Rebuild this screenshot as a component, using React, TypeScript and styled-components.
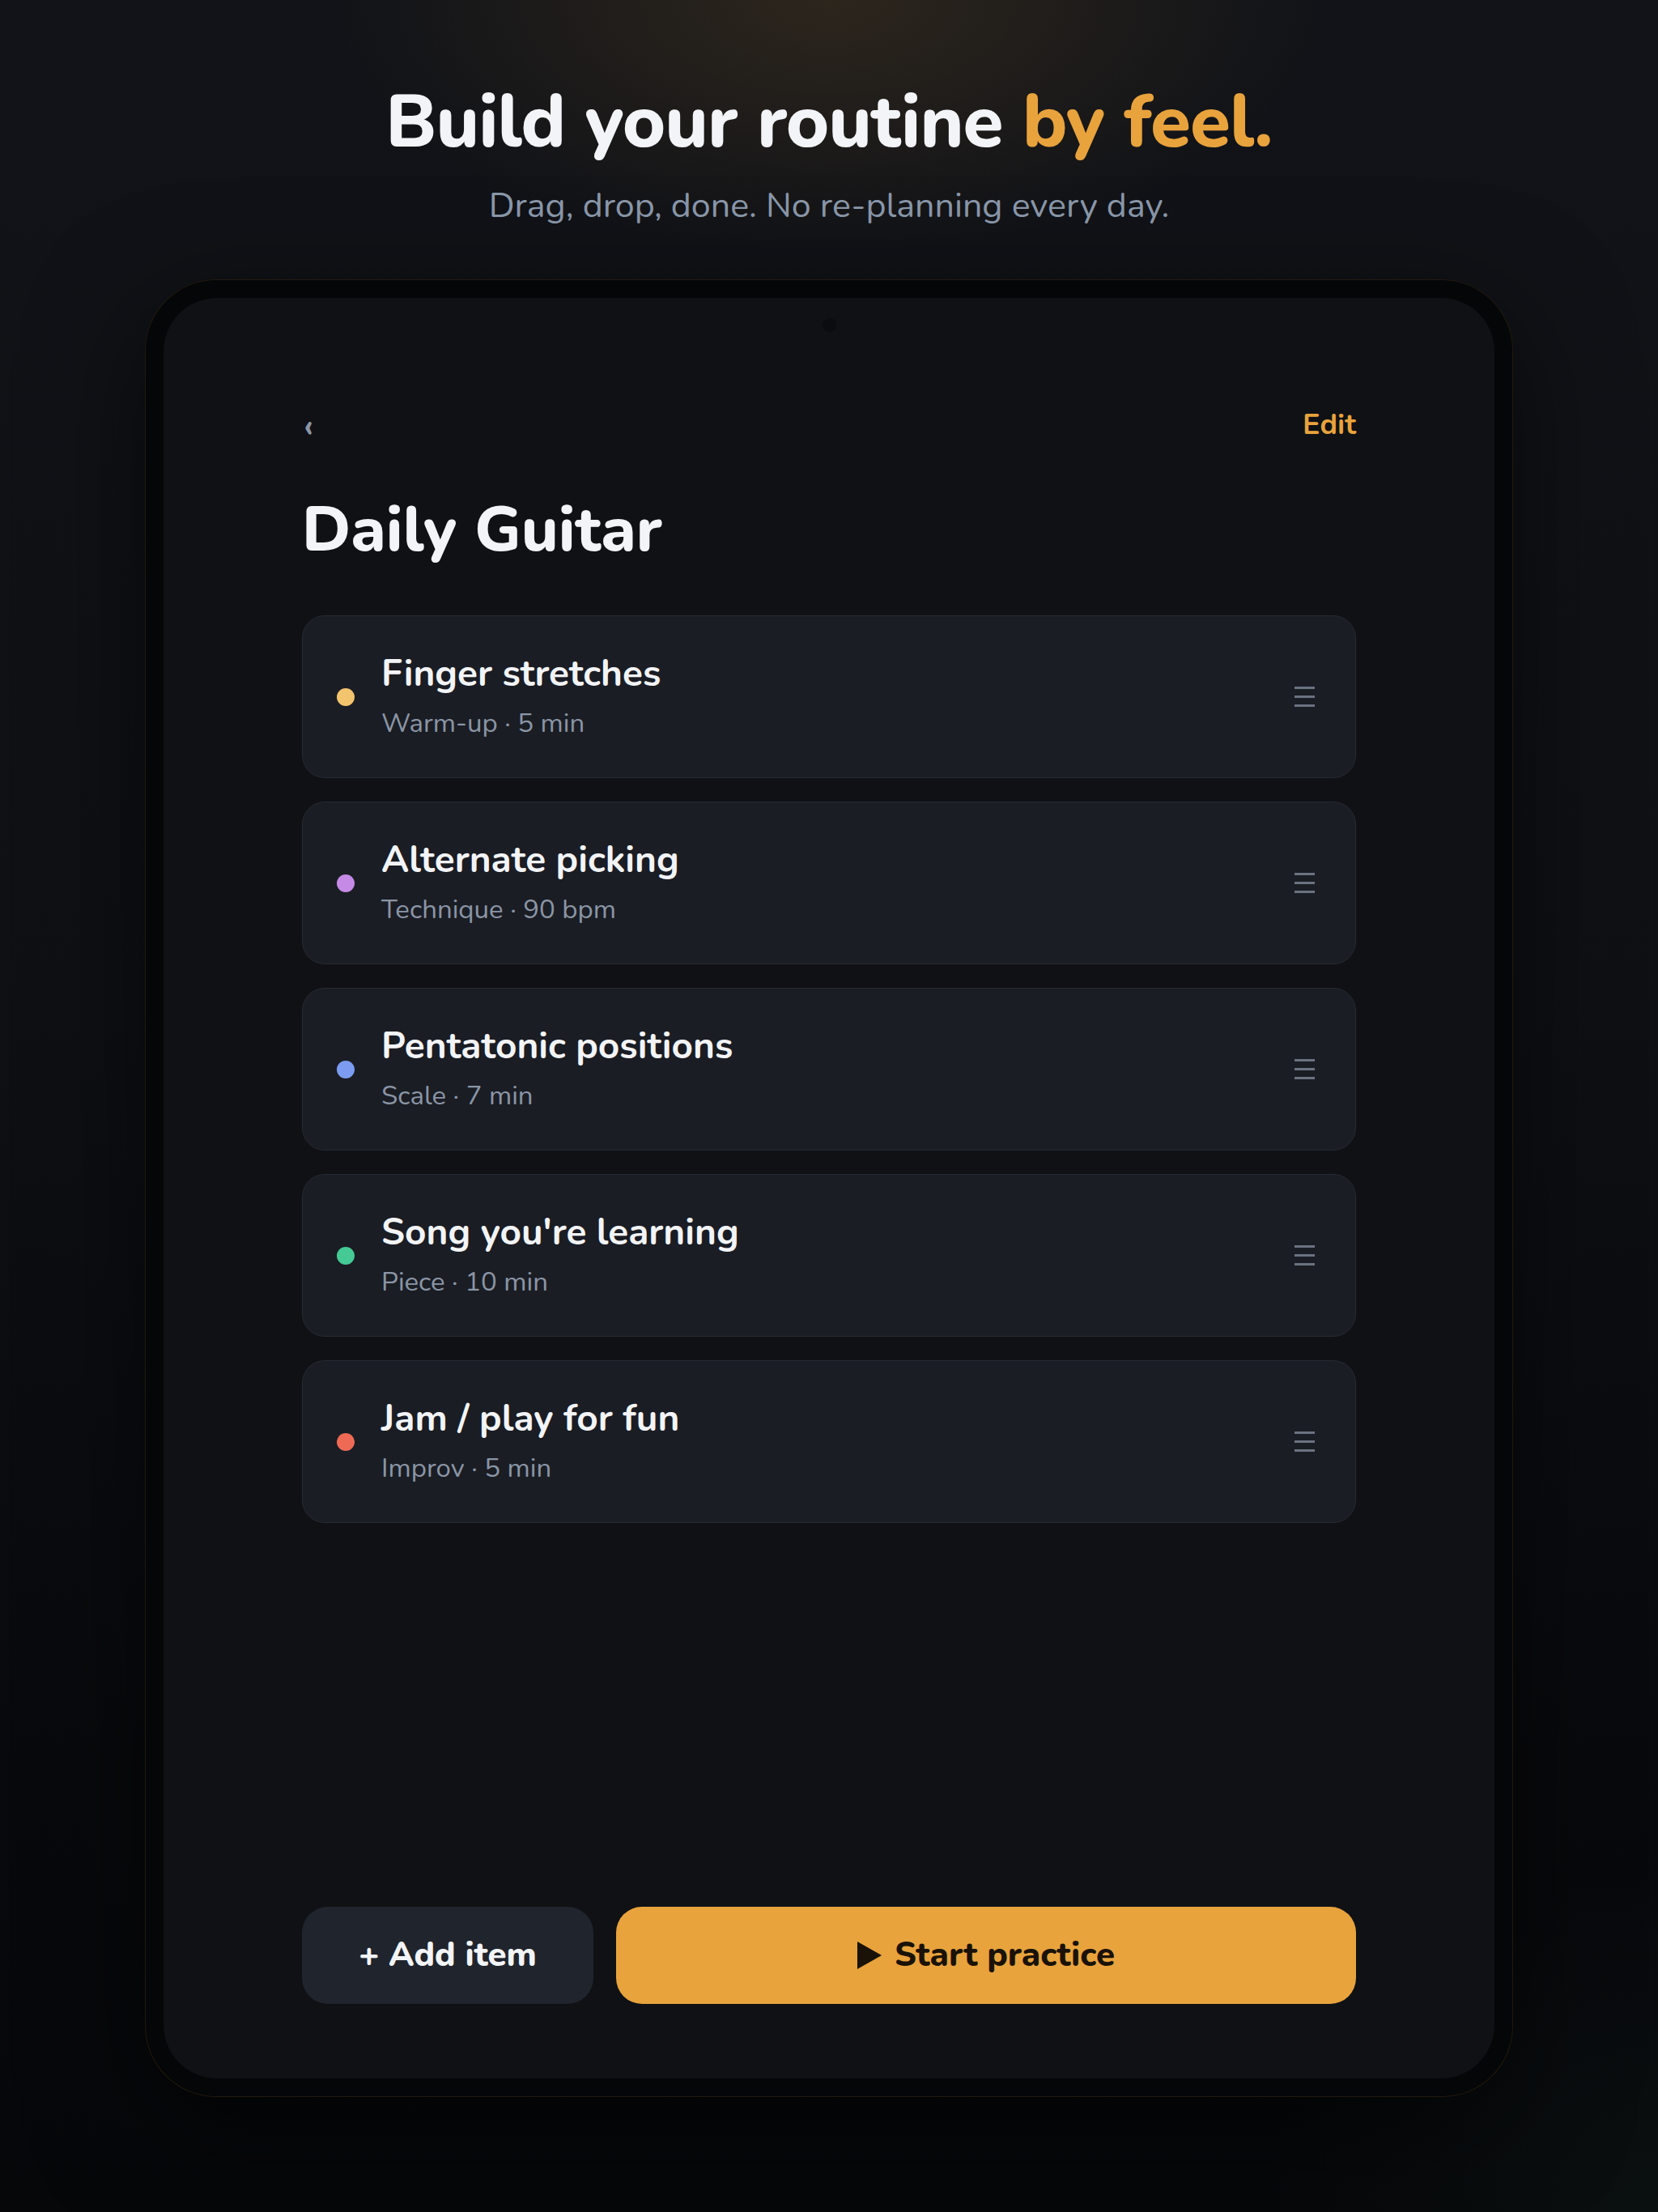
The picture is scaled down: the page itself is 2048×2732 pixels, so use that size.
import React from "react";
import styled, { createGlobalStyle } from "styled-components";

const GlobalStyle = createGlobalStyle`
  * { box-sizing: border-box; }
  body {
    margin: 0;
    background: #07080a;
    font-family: "Nunito", Lato, "Open Sans", sans-serif;
  }
`;

type Item = { title: string; meta: string; color: string };

const items: Item[] = [
  { title: "Finger stretches", meta: "Warm-up · 5 min", color: "#f2c46d" },
  { title: "Alternate picking", meta: "Technique · 90 bpm", color: "#c58ae6" },
  { title: "Pentatonic positions", meta: "Scale · 7 min", color: "#7b9cf0" },
  { title: "Song you're learning", meta: "Piece · 10 min", color: "#45c995" },
  { title: "Jam / play for fun", meta: "Improv · 5 min", color: "#ef6a55" },
];

const App = () => {
  return (
    <>
      <GlobalStyle />
      <Page>
        <Hero>
          <Headline>
            Build your routine <span>by feel.</span>
          </Headline>
          <Tagline>Drag, drop, done. No re-planning every day.</Tagline>
        </Hero>

        <Tablet>
          <Screen>
            <Camera />
            <Content>
              <TopBar>
                <Back>‹</Back>
                <EditLink>Edit</EditLink>
              </TopBar>
              <Title>Daily Guitar</Title>

              <List>
                {items.map((item) => (
                  <Card key={item.title}>
                    <Dot color={item.color} />
                    <CardText>
                      <CardTitle>{item.title}</CardTitle>
                      <CardMeta>{item.meta}</CardMeta>
                    </CardText>
                    <Handle>
                      <i />
                      <i />
                      <i />
                    </Handle>
                  </Card>
                ))}
              </List>

              <Actions>
                <AddButton>+ Add item</AddButton>
                <StartButton>
                  <svg width="30" height="34" viewBox="0 0 30 34">
                    <polygon points="0,0 30,17 0,34" fill="#1a1206" />
                  </svg>
                  Start practice
                </StartButton>
              </Actions>
            </Content>
          </Screen>
        </Tablet>
      </Page>
    </>
  );
};

export default App;

const Page = styled.div`
  min-height: 2732px;
  display: flex;
  flex-direction: column;
  align-items: center;
  background:
    radial-gradient(ellipse 820px 420px at 50% 0%, rgba(232, 163, 61, 0.13), transparent 75%),
    radial-gradient(ellipse 700px 600px at 100% 100%, rgba(70, 130, 100, 0.07), transparent 70%),
    linear-gradient(180deg, #111318 0%, #0e1014 45%, #08090c 80%, #060709 100%);
`;

const Hero = styled.header`
  padding-top: 106px;
  text-align: center;
`;

const Headline = styled.h1`
  margin: 0;
  font-size: 91px;
  line-height: 1;
  font-weight: 800;
  letter-spacing: -1px;
  color: #f3f4f7;

  span {
    color: #e8a33d;
  }
`;

const Tagline = styled.p`
  margin: 32px 0 0;
  font-size: 43px;
  line-height: 1.2;
  font-weight: 400;
  color: #8b98aa;
`;

const Tablet = styled.div`
  margin-top: 64px;
  width: 1690px;
  height: 2245px;
  padding: 22px;
  border-radius: 88px;
  background: #050608;
  border: 1px solid rgba(232, 163, 61, 0.12);
  box-shadow: 0 40px 140px rgba(0, 0, 0, 0.55);
`;

const Screen = styled.div`
  position: relative;
  height: 100%;
  border-radius: 66px;
  background: #0f1115;
  display: flex;
  justify-content: center;
`;

/* front camera, barely visible against the screen */
const Camera = styled.div`
  position: absolute;
  top: 25px;
  left: 50%;
  width: 17px;
  height: 17px;
  margin-left: -8px;
  border-radius: 50%;
  background: #0b0c0f;
`;

const Content = styled.div`
  width: 1302px;
  padding: 135px 0 92px;
  display: flex;
  flex-direction: column;
`;

const TopBar = styled.div`
  display: flex;
  align-items: center;
  justify-content: space-between;
  height: 43px;
`;

const Back = styled.span`
  font-size: 42px;
  line-height: 1;
  font-weight: 700;
  color: #8b95a5;
  padding-left: 2px;
  margin-top: 6px;
`;

const EditLink = styled.span`
  font-size: 36px;
  line-height: 1.2;
  font-weight: 700;
  color: #e8a33d;
`;

const Title = styled.h2`
  margin: 62px 0 0;
  font-size: 78px;
  line-height: 1.2;
  font-weight: 800;
  color: #f3f4f7;
`;

const List = styled.div`
  margin-top: 59px;
  display: flex;
  flex-direction: column;
  gap: 29px;
  flex: 1;
`;

const Card = styled.div`
  height: 201px;
  display: flex;
  align-items: center;
  padding: 0 50px 0 42px;
  background: #1a1d24;
  border: 1px solid #262a32;
  border-radius: 28px;
`;

const Dot = styled.span<{ color: string }>`
  width: 22px;
  height: 22px;
  flex-shrink: 0;
  border-radius: 50%;
  background: ${(p) => p.color};
`;

const CardText = styled.div`
  flex: 1;
  margin-left: 33px;
  margin-top: -2px;
`;

const CardTitle = styled.div`
  font-size: 46px;
  line-height: 1.25;
  font-weight: 700;
  color: #f3f4f7;
`;

const CardMeta = styled.div`
  margin-top: 12px;
  font-size: 33px;
  line-height: 1.3;
  font-weight: 400;
  color: #8b95a5;
`;

const Handle = styled.div`
  width: 25px;
  display: flex;
  flex-direction: column;
  gap: 8px;

  i {
    display: block;
    height: 3px;
    background: #6b7280;
  }
`;

const Actions = styled.div`
  display: flex;
  gap: 28px;
  height: 120px;
`;

const ButtonBase = styled.button`
  height: 100%;
  border: none;
  border-radius: 32px;
  font-family: inherit;
  font-size: 42px;
  font-weight: 800;
  display: flex;
  align-items: center;
  justify-content: center;
  gap: 16px;
`;

const AddButton = styled(ButtonBase)`
  width: 360px;
  background: #20242c;
  color: #f3f4f7;
`;

const StartButton = styled(ButtonBase)`
  flex: 1;
  background: #e8a33d;
  color: #1a1206;
`;
